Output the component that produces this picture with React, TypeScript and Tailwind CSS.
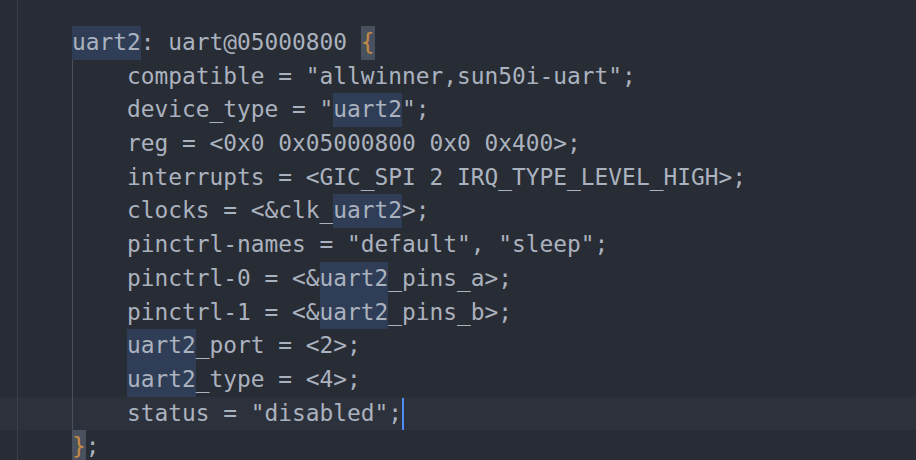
import React from "react";

const HL = "inline-block h-[33.7px] align-top bg-[#2f3d56]";

type Seg = { t: string; c?: string };

const Row = ({ children, current }: { children: React.ReactNode; current?: boolean }) => (
  <div
    className={
      "h-[33.7px] leading-[33.7px] pl-[72px] whitespace-pre " + (current ? "bg-[#2d313b]" : "")
    }
  >
    {children}
  </div>
);

const H = ({ children }: { children: React.ReactNode }) => <span className={HL}>{children}</span>;

export default function App() {
  return (
    <div
      className="relative w-[916px] h-[460px] overflow-hidden bg-[#282c34] text-[#abb2bf] text-[22.85px]"
      style={{ fontFamily: '"DejaVu Sans Mono", "Liberation Mono", monospace' }}
    >
      <div className="pt-[26px]">
        <Row>
          <H>uart2</H>: uart@05000800{" "}
          <span className="inline-block h-[33.7px] align-top bg-[#4a515e] text-[#c48a45]">{"{"}</span>
        </Row>
        <Row>{'    compatible = "allwinner,sun50i-uart";'}</Row>
        <Row>
          {'    device_type = "'}
          <H>uart2</H>
          {'";'}
        </Row>
        <Row>{"    reg = <0x0 0x05000800 0x0 0x400>;"}</Row>
        <Row>{"    interrupts = <GIC_SPI 2 IRQ_TYPE_LEVEL_HIGH>;"}</Row>
        <Row>
          {"    clocks = <&clk_"}
          <H>uart2</H>
          {">;"}
        </Row>
        <Row>{'    pinctrl-names = "default", "sleep";'}</Row>
        <Row>
          {"    pinctrl-0 = <&"}
          <H>uart2</H>
          {"_pins_a>;"}
        </Row>
        <Row>
          {"    pinctrl-1 = <&"}
          <H>uart2</H>
          {"_pins_b>;"}
        </Row>
        <Row>
          {"    "}
          <H>uart2</H>
          {"_port = <2>;"}
        </Row>
        <Row>
          {"    "}
          <H>uart2</H>
          {"_type = <4>;"}
        </Row>
        <Row current>
          {'    status = "disabled";'}
          <span className="relative inline-block w-0 h-[33.7px] align-top">
            <span className="absolute left-[0px] top-[1px] w-[2px] h-[32px] bg-[#4d8cf0]" />
          </span>
        </Row>
        <Row>
          <span className="inline-block h-[33.7px] align-top bg-[#4a515e] text-[#c48a45]">{"}"}</span>
          ;
        </Row>
      </div>
      {/* gutter line */}
      <div className="absolute left-[17px] top-0 w-px h-full bg-[#3a3f4a]" />
      {/* indent guide */}
      <div className="absolute left-[72px] top-[60px] w-px h-[371px] bg-[#4b505b]" />
    </div>
  );
}
